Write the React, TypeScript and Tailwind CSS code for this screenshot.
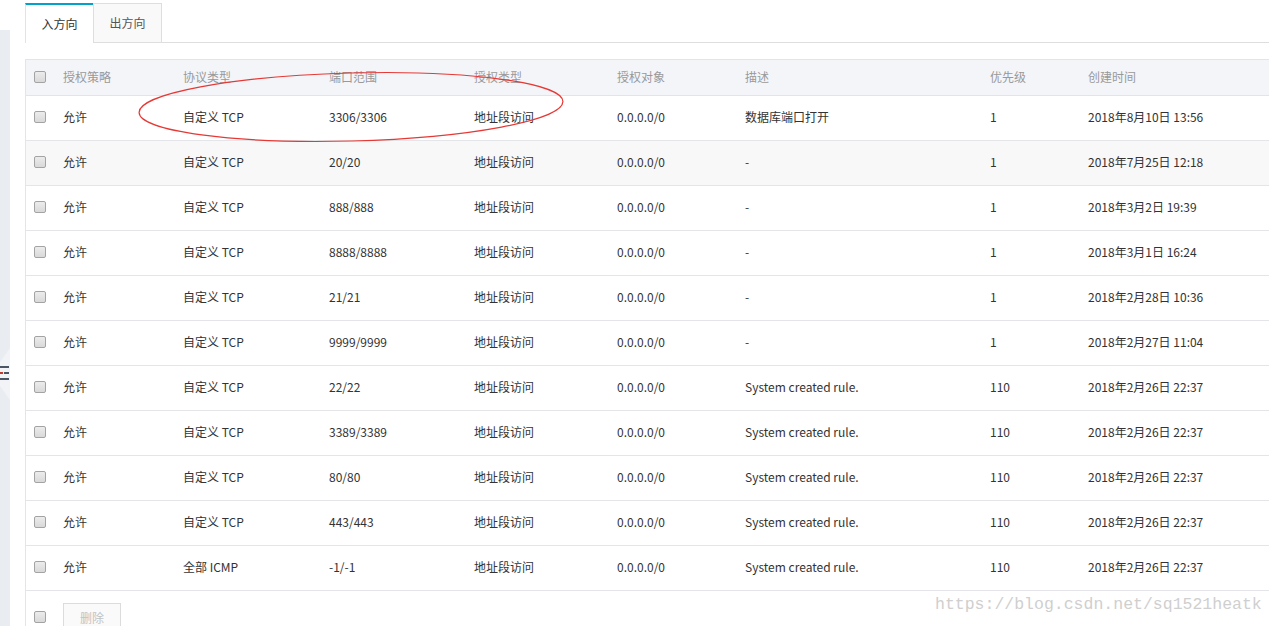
import React from "react";

type Rule = {
  proto: string;
  port: string;
  desc: string;
  prio: string;
  time: string;
};

const RULES: Rule[] = [
  { proto: "自定义 TCP", port: "3306/3306", desc: "数据库端口打开", prio: "1", time: "2018年8月10日 13:56" },
  { proto: "自定义 TCP", port: "20/20", desc: "-", prio: "1", time: "2018年7月25日 12:18" },
  { proto: "自定义 TCP", port: "888/888", desc: "-", prio: "1", time: "2018年3月2日 19:39" },
  { proto: "自定义 TCP", port: "8888/8888", desc: "-", prio: "1", time: "2018年3月1日 16:24" },
  { proto: "自定义 TCP", port: "21/21", desc: "-", prio: "1", time: "2018年2月28日 10:36" },
  { proto: "自定义 TCP", port: "9999/9999", desc: "-", prio: "1", time: "2018年2月27日 11:04" },
  { proto: "自定义 TCP", port: "22/22", desc: "System created rule.", prio: "110", time: "2018年2月26日 22:37" },
  { proto: "自定义 TCP", port: "3389/3389", desc: "System created rule.", prio: "110", time: "2018年2月26日 22:37" },
  { proto: "自定义 TCP", port: "80/80", desc: "System created rule.", prio: "110", time: "2018年2月26日 22:37" },
  { proto: "自定义 TCP", port: "443/443", desc: "System created rule.", prio: "110", time: "2018年2月26日 22:37" },
  { proto: "全部 ICMP", port: "-1/-1", desc: "System created rule.", prio: "110", time: "2018年2月26日 22:37" },
];

const COLS = "grid grid-cols-[37px_120px_146px_145px_143px_128px_245px_98px_1fr] items-center";

function Checkbox() {
  return (
    <span className="block w-[12px] h-[12px] ml-[8px] rounded-[2px] border border-[#a3a3a3] bg-gradient-to-b from-[#ececec] to-[#d9d9d9]" />
  );
}

function LeftStrip() {
  return (
    <div className="w-[10px] shrink-0 flex flex-col">
      <div className="h-[30px] shrink-0 bg-white" />
      <div className="flex-1 bg-[#e9ecf1] relative">
        <svg className="absolute left-0 top-[318px]" width="10" height="52" viewBox="0 0 10 52">
          <polygon points="10,0 0,14 0,38 10,52" fill="#f1f3f6" />
          <rect x="0" y="18" width="9" height="2" fill="#4b5563" />
          <rect x="0" y="24" width="3" height="2" fill="#c0392b" />
          <rect x="4" y="24" width="5" height="2" fill="#4b5563" />
          <rect x="0" y="30" width="9" height="2" fill="#4b5563" />
        </svg>
      </div>
    </div>
  );
}

export default function App() {
  return (
    <div
      className="relative w-[1269px] h-[626px] overflow-hidden bg-white flex text-[12px] text-[#333]"
      style={{ fontFamily: '"Noto Sans CJK SC", "Noto Sans", sans-serif' }}
    >
      <LeftStrip />
      <div className="w-[15px] shrink-0" />
      <div className="flex-1 flex flex-col">
        {/* tabs */}
        <div className="flex shrink-0 h-[43px] pt-[3px] border-b border-[#dedede]">
          <div className="w-[68px] -mb-px bg-white border-t-2 border-[#00a2ca] border-l border-l-[#e3e3e3] flex items-center justify-center text-[#333]">
            入方向
          </div>
          <div className="w-[69px] bg-[#f9f9f9] border border-[#dedede] border-b-0 flex items-center justify-center text-[#555]">
            出方向
          </div>
        </div>

        {/* table */}
        <div className="mt-[16px] shrink-0 border-l border-[#e3e5e8]">
          <div className={`${COLS} h-[37px] pb-[2px] bg-[#f4f5f9] border-t border-b border-[#e1e4e9] text-[#999]`}>
            <Checkbox />
            <span>授权策略</span>
            <span>协议类型</span>
            <span>端口范围</span>
            <span>授权类型</span>
            <span>授权对象</span>
            <span>描述</span>
            <span>优先级</span>
            <span>创建时间</span>
          </div>
          {RULES.map((r, i) => (
            <div
              key={i}
              className={`${COLS} h-[45px] pb-[3px] border-b border-[#e3e5e8] ${i === 1 ? "bg-[#f8f8f9]" : "bg-white"}`}
            >
              <Checkbox />
              <span>允许</span>
              <span>{r.proto}</span>
              <span>{r.port}</span>
              <span>地址段访问</span>
              <span>0.0.0.0/0</span>
              <span>{r.desc}</span>
              <span>{r.prio}</span>
              <span>{r.time}</span>
            </div>
          ))}
          <div className="flex items-start h-[40px] pt-[12px]">
            <div className="w-[37px] pt-[8px]">
              <Checkbox />
            </div>
            <button
              disabled
              className="w-[58px] h-[30px] border border-[#dcdcdc] bg-[#fafafa] text-[#c2c2c2] text-[12px]"
            >
              删除
            </button>
          </div>
        </div>
      </div>

      {/* hand-drawn annotation */}
      <svg className="absolute left-0 top-0 pointer-events-none" width="1269" height="626">
        <ellipse
          cx="351"
          cy="107"
          rx="212"
          ry="34"
          transform="rotate(-1.5 351 107)"
          fill="none"
          stroke="#e53935"
          strokeWidth="1.2"
        />
      </svg>

      {/* watermark */}
      <div
        className="absolute left-[935px] top-[594px] text-[16.5px] leading-[22px] text-[#cfcfcf] whitespace-nowrap"
        style={{ fontFamily: '"Liberation Mono", monospace' }}
      >
        https://blog.csdn.net/sq1521heatk
      </div>
    </div>
  );
}
